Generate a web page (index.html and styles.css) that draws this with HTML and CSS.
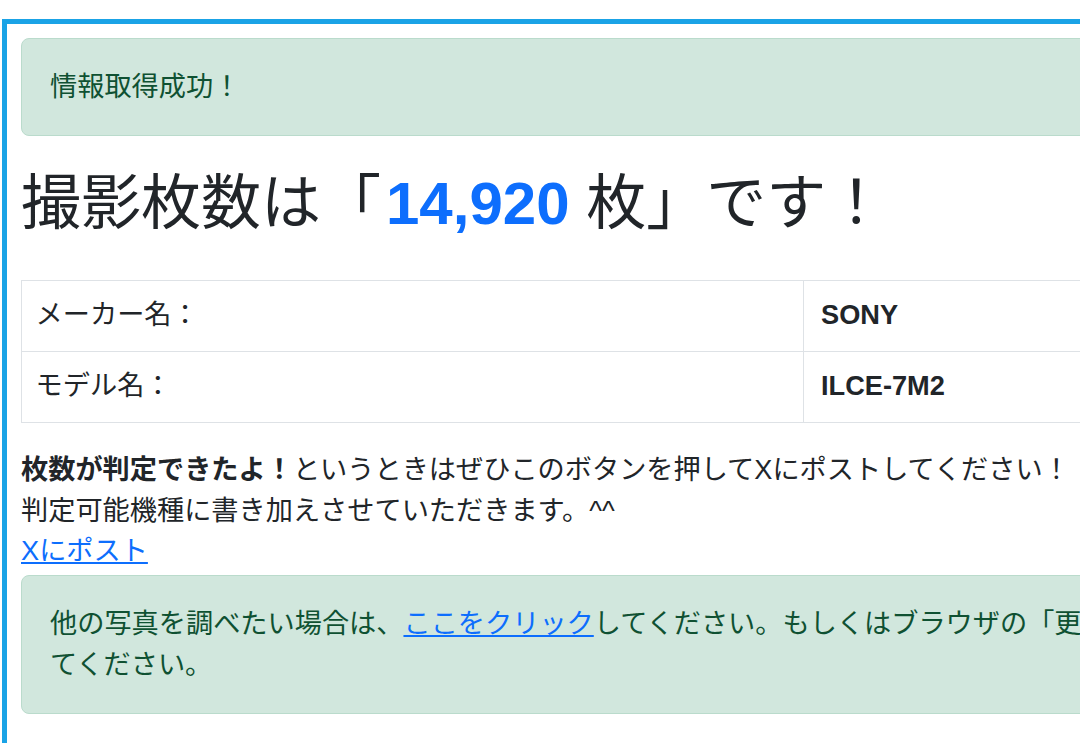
FILE: index.html
```html
<!DOCTYPE html>
<html lang="ja">
<head>
<meta charset="utf-8">
<title>撮影枚数</title>
<link rel="stylesheet" href="styles.css">
</head>
<body>
<div class="frame">
  <div class="alert alert-first">情報取得成功！</div>
  <h1 class="title">撮影枚数は「<strong class="count">14,920</strong> 枚」です！</h1>
  <table class="info">
    <colgroup><col class="col-label"><col></colgroup>
    <tr><td>メーカー名：</td><td class="val">SONY</td></tr>
    <tr><td>モデル名：</td><td class="val">ILCE-7M2</td></tr>
  </table>
  <p class="note"><strong>枚数が判定できたよ！</strong>というときはぜひこのボタンを押してXにポストしてください！<br>判定可能機種に書き加えさせていただきます。^^</p>
  <a class="post" href="#">Xにポスト</a>
  <div class="alert alert-second">他の写真を調べたい場合は、<a href="#">ここをクリック</a>してください。もしくはブラウザの「更新」ボタンを押し<br>てください。</div>
</div>
</body>
</html>
```

FILE: styles.css
```css
html, body {
  margin: 0;
  padding: 0;
  overflow: hidden;
  background: #ffffff;
}
body {
  font-family: "Liberation Sans", "Noto Sans CJK JP", sans-serif;
  font-size: 27.2px;
  line-height: 40.8px;
  color: #212529;
}
.frame {
  margin: 19px 0 0 2px;
  width: 1400px;
  border: 5px solid #1aa3e6;
  padding: 14px 14px 80px 14px;
  white-space: nowrap;
}
.alert {
  background: #d1e7dd;
  border: 1px solid #badbcc;
  color: #0f5132;
  border-radius: 8px;
  padding: 27.6px 28px;
}
.alert a {
  color: #0d6efd;
  text-decoration: underline;
}
.title {
  margin: 32px 0 40px 0;
  font-size: 60px;
  line-height: 72px;
  font-weight: 400;
  color: #212529;
}
.count {
  color: #0d6efd;
  font-weight: 700;
  margin-left: 5px;
}
.info {
  width: 100%;
  border-collapse: collapse;
  table-layout: fixed;
  margin-bottom: 27.2px;
}
.col-label {
  width: 782px;
}
.info td {
  border: 1.5px solid #dee2e6;
  padding: 14.5px 13.6px;
}
.info td.val {
  font-weight: 700;
  padding-left: 17px;
}
.note {
  margin: 0;
}
.post {
  display: block;
  color: #0d6efd;
  text-decoration: underline;
}
.alert-second {
  margin-top: 3px;
}
```
